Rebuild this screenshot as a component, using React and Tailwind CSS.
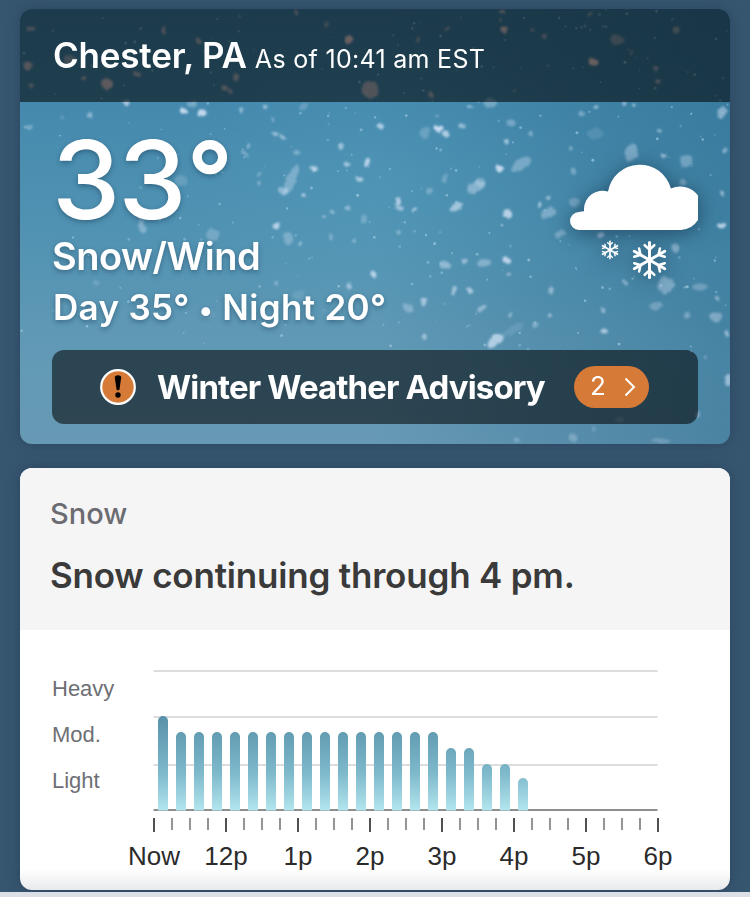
import React from 'react';

// x, y, rx, ry, rotation, opacity
const headerFlakes = [
  [30, 29, 5, 3, 0, 0.35], [28, 66, 5, 5, 30, 0.45], [70, 60, 7, 6, 0, 0.3], [83, 78, 3, 2, 0, 0.5],
  [107, 84, 7, 6, 20, 0.5], [31, 85, 3, 3, 0, 0.35], [164, 30, 2, 5, 0, 0.45], [198, 41, 3, 3, 0, 0.4],
  [137, 74, 5, 3, 30, 0.4], [225, 88, 4, 3, 30, 0.4], [236, 77, 4, 4, 0, 0.4], [230, 92, 3, 3, 0, 0.4],
  [296, 13, 2, 3, 0, 0.45], [326, 24, 3, 3, 0, 0.3], [349, 40, 5, 4, -20, 0.6], [370, 90, 10, 9, 30, 0.4],
  [502, 12, 3, 2, 0, 0.5], [501, 20, 2, 2, 0, 0.4], [504, 30, 4, 4, 20, 0.55], [590, 14, 2, 3, 30, 0.45],
  [447, 29, 4, 2, -20, 0.35], [418, 40, 2, 4, 10, 0.3], [533, 30, 2, 2, 0, 0.35], [545, 36, 3, 3, 0, 0.3],
  [593, 62, 5, 4, 0, 0.6], [617, 40, 8, 6, 10, 0.25], [676, 30, 4, 4, 0, 0.3], [655, 68, 3, 3, 0, 0.35],
  [658, 82, 3, 3, 20, 0.4], [431, 95, 3, 3, 0, 0.4], [514, 90, 2, 2, 0, 0.3], [631, 52, 2, 2, 0, 0.35],
];

const skyFlakes = [
  // upper left
  [126, 103, 4, 3, 0, 0.7], [184, 111, 4, 3, 30, 0.9], [202, 113, 5, 4, 0, 0.9], [192, 104, 6, 4, 0, 0.35],
  [90, 116, 4, 3, 30, 0.5], [29, 127, 4, 3, 0, 0.4], [62, 117, 2, 2, 0, 0.45], [241, 110, 2, 3, 0, 0.6],
  [265, 107, 2, 3, 20, 0.6], [273, 120, 2, 3, 0, 0.5], [304, 106, 5, 3, -20, 0.25], [275, 134, 4, 2, 10, 0.6],
  [283, 137, 4, 2, 40, 0.7], [249, 146, 2, 3, 20, 0.6], [245, 154, 5, 2, 30, 0.4], [259, 174, 2, 2, 0, 0.5],
  [297, 153, 4, 2, 0, 0.4], [341, 146, 3, 4, 20, 0.6], [347, 164, 4, 3, 20, 0.7], [367, 163, 3, 5, 15, 0.8],
  [314, 169, 4, 3, 0, 0.8], [291, 180, 6, 18, 24, 0.36], [283, 191, 5, 5, 0, 0.5], [360, 179, 4, 3, 0, 0.7],
  [304, 196, 2, 2, 0, 0.8], [259, 184, 2, 2, 0, 0.5], [348, 208, 3, 2, 0, 0.6], [332, 212, 3, 2, 20, 0.5],
  [324, 217, 2, 2, 0, 0.6], [364, 219, 3, 5, 0, 0.3], [276, 226, 4, 3, -20, 0.8], [181, 181, 8, 6, 0, 0.2],
  [142, 226, 4, 9, -8, 0.4], [213, 235, 8, 7, 0, 0.28], [288, 238, 6, 7, -30, 0.33], [300, 244, 2, 2, 0, 0.6],
  [331, 237, 2, 4, 0, 0.4], [354, 241, 2, 2, 0, 0.5], [374, 274, 4, 4, 0, 0.8], [349, 286, 3, 3, 30, 0.6],
  [277, 283, 2, 2, 0, 0.5], [96, 283, 4, 3, 0, 0.2], [207, 314, 8, 6, 0, 0.15], [298, 295, 7, 5, 0, 0.13],
  // right
  [380, 126, 4, 3, 30, 0.75], [438, 129, 5, 4, 20, 0.95], [446, 134, 4, 4, 50, 0.75], [425, 133, 6, 7, 20, 0.25],
  [437, 116, 2, 2, 0, 0.6], [462, 126, 4, 3, 0, 0.6], [470, 107, 3, 2, 0, 0.7], [490, 103, 7, 6, 0, 0.35],
  [511, 123, 5, 4, 0, 0.35], [506, 142, 3, 3, 0, 0.7], [531, 134, 3, 2, 30, 0.45], [499, 169, 4, 4, 0, 0.9],
  [521, 164, 12, 6, -35, 0.36], [476, 187, 12, 6, -28, 0.45], [481, 182, 5, 6, 0, 0.3], [445, 178, 2, 5, 20, 0.3],
  [429, 191, 3, 4, 0, 0.35], [398, 201, 3, 4, 0, 0.75], [400, 208, 4, 3, 20, 0.6], [414, 210, 4, 2, -30, 0.75],
  [456, 207, 8, 4, -25, 0.65], [507, 214, 5, 5, 0, 0.8], [540, 205, 2, 3, 0, 0.8], [548, 197, 3, 2, 0, 0.7],
  [549, 213, 9, 6, -20, 0.38], [574, 202, 7, 6, 0, 0.3], [573, 171, 2, 4, -20, 0.4], [571, 148, 2, 2, 0, 0.5],
  [582, 114, 4, 4, 0, 0.4], [596, 107, 2, 2, 0, 0.6], [595, 134, 9, 7, 0, 0.14], [631, 153, 7, 10, 20, 0.4],
  [624, 104, 2, 2, 0, 0.6], [634, 105, 2, 2, 0, 0.7], [659, 131, 3, 2, 0, 0.6], [663, 156, 4, 2, 30, 0.6],
  [686, 161, 7, 8, 20, 0.35], [683, 183, 4, 3, 0, 0.4], [722, 113, 5, 7, 20, 0.5], [725, 150, 2, 3, 0, 0.5],
  [722, 193, 2, 4, 0, 0.6], [721, 226, 5, 4, 0, 0.8], [445, 265, 6, 5, 0, 0.5], [465, 261, 4, 3, 0, 0.6],
  [484, 263, 9, 4, -10, 0.4], [507, 260, 5, 4, 20, 0.85], [509, 274, 2, 2, 0, 0.7], [454, 290, 3, 6, 20, 0.6],
  [470, 291, 4, 2, 20, 0.7], [424, 301, 3, 5, 15, 0.65], [408, 308, 6, 5, 20, 0.35], [482, 308, 6, 3, -40, 0.5],
  [511, 315, 2, 3, 0, 0.5], [551, 290, 3, 4, 0, 0.5], [550, 315, 2, 3, 0, 0.7], [560, 234, 7, 4, -10, 0.35],
  [495, 341, 10, 6, -32, 0.75], [512, 330, 15, 4, -30, 0.14], [424, 337, 3, 4, 10, 0.6], [535, 325, 3, 3, 0, 0.4],
  [604, 331, 4, 4, 0, 0.7], [603, 310, 2, 4, -30, 0.5], [625, 283, 4, 2, 30, 0.5], [601, 235, 4, 3, 0, 0.6],
  [666, 285, 9, 10, 30, 0.4], [656, 306, 7, 4, -20, 0.3], [675, 248, 5, 5, 0, 0.45], [700, 287, 9, 4, 0, 0.3],
  [717, 298, 2, 4, -30, 0.5], [716, 317, 7, 6, 0, 0.4], [687, 315, 3, 3, 0, 0.4], [727, 334, 3, 3, 0, 0.6],
  [728, 380, 3, 8, 0, 0.6], [706, 357, 2, 2, 0, 0.4], [399, 232, 2, 2, 0, 0.5],
  // below the advisory
  [573, 438, 5, 5, 0, 0.3], [517, 440, 3, 3, 0, 0.3], [660, 441, 12, 3, 0, 0.25], [594, 429, 2, 4, 0, 0.25],
  [698, 415, 3, 3, 0, 0.4], [620, 420, 6, 3, 0, 0.2],
];

// tiny specks between the bigger flakes
const specks = Array.from({ length: 260 }, (_, i) => {
  const rand = (n) => {
    const v = Math.sin((i + 1) * n) * 43758.5453;
    return v - Math.floor(v);
  };
  // thinner towards the bottom left
  const x = 20 + 710 * Math.pow(rand(12.9898), 0.75);
  const y = 9 + 345 * rand(78.233);
  return [x, y, 0.7 + rand(39.346) * 0.9, 0.2 + rand(11.135) * 0.4];
});

const hours = ['Now', '12p', '1p', '2p', '3p', '4p', '5p', '6p'];
const levels = [94, ...Array(15).fill(78), 62, 62, 46, 46, 32];

const Flakes = ({ items, fill, boost = 1 }) => (
  <g fill={fill} filter="url(#soft)">
    {items.map(([x, y, rx, ry, r, o], i) => (
      <ellipse
        key={i}
        cx={x}
        cy={y}
        rx={rx * 0.88}
        ry={ry * 0.88}
        opacity={Math.min(1, o * boost)}
        transform={`rotate(${r} ${x} ${y})`}
      />
    ))}
  </g>
);

const SnowSky = () => (
  <svg className="absolute inset-0 w-full h-full" viewBox="20 9 710 435" preserveAspectRatio="none" aria-hidden="true">
    <defs>
      <linearGradient id="sky" x1="0" y1="0" x2="0" y2="1">
        <stop offset="0" stopColor="#3f83a9" />
        <stop offset="0.22" stopColor="#458aae" />
        <stop offset="0.5" stopColor="#5092b2" />
        <stop offset="0.8" stopColor="#629ab6" />
        <stop offset="1" stopColor="#6799b4" />
      </linearGradient>
      <linearGradient id="shade" x1="0" y1="0" x2="1" y2="0">
        <stop offset="0.5" stopColor="#2d6d90" stopOpacity="0" />
        <stop offset="1" stopColor="#2d6d90" stopOpacity="0.5" />
      </linearGradient>
      <radialGradient id="glow">
        <stop offset="0" stopColor="#5fb0cf" stopOpacity="0.15" />
        <stop offset="1" stopColor="#5fb0cf" stopOpacity="0" />
      </radialGradient>
      <filter id="soft" x="-5%" y="-5%" width="110%" height="110%">
        <feTurbulence type="fractalNoise" baseFrequency="0.15" numOctaves="2" seed="4" />
        <feDisplacementMap in="SourceGraphic" scale="5" xChannelSelector="R" yChannelSelector="G" />
        <feGaussianBlur stdDeviation="1.1" />
      </filter>
      <filter id="blur" x="-5%" y="-5%" width="110%" height="110%">
        <feGaussianBlur stdDeviation="0.5" />
      </filter>
    </defs>
    <rect x="20" y="9" width="710" height="435" fill="url(#sky)" />
    <rect x="20" y="9" width="710" height="435" fill="url(#shade)" />
    <ellipse cx="390" cy="180" rx="210" ry="150" fill="url(#glow)" />
    <Flakes items={headerFlakes} fill="#fbdcd8" boost={1.5} />
    <Flakes items={skyFlakes} fill="#d0e1f5" />
    <g fill="#b5dcf0" filter="url(#blur)">
      {specks.map(([x, y, r, o], i) => (
        <circle key={i} cx={x} cy={y} r={r} opacity={o} />
      ))}
    </g>
  </svg>
);

const Flake = ({ x, y, scale, weight }) => (
  <g transform={`translate(${x} ${y}) scale(${scale})`} stroke="#fff" fill="none" strokeLinecap="round">
    {[0, 60, 120, 180, 240, 300].map((a) => (
      <g key={a} transform={`rotate(${a})`}>
        <path d="M0 0V-17.600" strokeWidth={weight} />
        <path d="M-4.800 -14.800L0 -10.400L4.800 -14.800" strokeWidth={weight * 0.85} />
      </g>
    ))}
  </g>
);

const SnowCloud = () => (
  <svg
    className="w-[128px] h-[117px] overflow-visible drop-shadow-[0_3px_10px_rgba(10,40,65,0.6)]"
    viewBox="570 164 128 117"
  >
    <path
      fill="#fff"
      d="M579 230A9 9 0 0 1 579 212Q581.500 211.500 584 211.300V209A18.500 18.500 0 0 1 608 191.500A32.300 32.300 0 0 1 671 188.500A22 22 0 0 1 698 195.500V220A22 22 0 0 1 681 230Z"
    />
    <Flake x={610} y={250} scale={0.49} weight={3.4} />
    <Flake x={649.5} y={260} scale={1} weight={3} />
  </svg>
);

const AlertIcon = () => (
  <svg className="w-9 h-9" viewBox="0 0 36 36">
    <circle cx="18" cy="18" r="16.800" fill="#d67a38" stroke="#fff" strokeWidth="2.200" />
    <path d="M14.800 8.500C14.800 5.400 21.200 5.400 21.200 8.500L19.500 20.200C19.200 21.700 16.800 21.700 16.500 20.200Z" fill="#000" />
    <circle cx="18" cy="26" r="2.700" fill="#000" />
  </svg>
);

const CurrentConditions = () => (
  <div className="relative h-[435px] rounded-xl overflow-hidden text-white shadow-[0_0_14px_rgba(35,50,80,0.45)]">
    <SnowSky />
    <div className="relative">
      <div className="h-[93px] px-[33px] flex items-baseline bg-black/55 leading-[93px] whitespace-nowrap">
        <h1 className="text-[35px] font-semibold tracking-[-0.2px]">Chester, PA</h1>
        <span className="ml-[8px] text-[25px] tracking-[0.3px]">As of 10:41 am EST</span>
      </div>

      <div className="px-8 pt-[22px] pb-5">
        <div className="h-[212px] flex justify-between [text-shadow:0_2px_5px_rgba(20,50,75,0.45)] whitespace-nowrap">
          <div>
            <p className="h-[110px] flex text-[109px] leading-[110px] font-medium tracking-[-2px]">
              33<span className="ml-[2px] text-[101px] leading-[106px] font-semibold">°</span>
            </p>
            <p className="text-[38px] leading-[44px] font-[570] tracking-[-0.5px]">Snow/Wind</p>
            <p className="pl-px text-[35px] leading-[58px] font-semibold tracking-[0.32px]">
              Day 35° <span className="text-[28px] leading-none">•</span> Night 20°
            </p>
          </div>
          <div className="pt-10">
            <SnowCloud />
          </div>
        </div>

        {/* Advisory banner */}
        <div className="mt-[14px] h-[74px] pl-12 pr-[49px] flex items-center justify-between rounded-xl bg-black/55 whitespace-nowrap">
          <div className="flex items-center gap-[21px]">
            <AlertIcon />
            <p className="pt-[2px] text-[33px] font-[650] tracking-[-0.88px]">Winter Weather Advisory</p>
          </div>
          <div className="w-[75px] h-[42px] pl-[16px] pr-[13px] flex items-center justify-between rounded-full bg-[#d67a38]">
            <span className="text-[26px] leading-[42px] -mt-[2px]">2</span>
            <svg className="w-[12px] h-[20px]" viewBox="0 0 12 20" fill="none" stroke="#fff" strokeWidth="2">
              <path d="M1.500 1.500L10 10L1.500 18.500" />
            </svg>
          </div>
        </div>
      </div>
    </div>
  </div>
);

const SnowChart = () => (
  <svg className="block w-full h-[260px] font-['Liberation_Sans',sans-serif]" viewBox="20 630 710 260">
    <defs>
      <linearGradient id="bar" gradientUnits="userSpaceOnUse" x1="0" y1="716" x2="0" y2="810">
        <stop offset="0" stopColor="#5891a9" />
        <stop offset="0.6" stopColor="#7db8cb" />
        <stop offset="1" stopColor="#b2e5ee" />
      </linearGradient>
    </defs>
    {[671, 717, 765].map((y) => (
      <path key={y} d={`M153.500 ${y}H657.500`} stroke="#dddddf" strokeWidth="2" />
    ))}
    <path d="M153.500 810H657.500" stroke="#8e8e90" strokeWidth="2" />
    {levels.map((h, i) => {
      const x = 158 + i * 18;
      return <path key={i} fill="url(#bar)" d={`M${x} 810.500V${815 - h}a5 5 0 0 1 10 0V810.500Z`} />;
    })}
    {Array.from({ length: 29 }, (_, i) => (
      <rect
        key={i}
        x={153 + i * 18}
        y="818"
        width="2"
        height={i % 4 === 0 ? 14 : 12}
        fill={i % 4 === 0 ? '#505052' : '#949496'}
      />
    ))}
    <g fill="#6e6f75" fontSize="22">
      <text x="52" y="696">Heavy</text>
      <text x="52" y="742">Mod.</text>
      <text x="52" y="788">Light</text>
    </g>
    <g fill="#2b2b2b" fontSize="26" textAnchor="middle">
      {hours.map((label, i) => (
        <text key={label} x={154 + i * 72} y="865">{label}</text>
      ))}
    </g>
  </svg>
);

const SnowForecast = () => (
  <div className="mt-6 h-[422px] rounded-xl overflow-hidden bg-linear-to-b from-white from-95% to-[#e9eaec] shadow-[0_0_14px_rgba(35,50,80,0.45)] whitespace-nowrap">
    <div className="h-[162px] px-[30px] pt-[25px] bg-[#f5f5f5]">
      <p className="text-[29px] leading-[42px] font-medium text-[#6b6c72]">Snow</p>
      <h2 className="mt-[19px] text-[35px] leading-[42px] font-semibold tracking-[-0.2px] text-[#3a3a3a]">Snow continuing through 4 pm.</h2>
    </div>
    <SnowChart />
  </div>
);

const App = () => {
  return (
    <div className="h-[897px] flex flex-col justify-between overflow-hidden bg-[#36566f] font-['Inter',sans-serif]">
      <div className="px-5 pt-[9px]">
        <CurrentConditions />
        <SnowForecast />
      </div>
      <div className="h-[5px] bg-[#dcdfe6]"></div>
    </div>
  );
};

export default App;
